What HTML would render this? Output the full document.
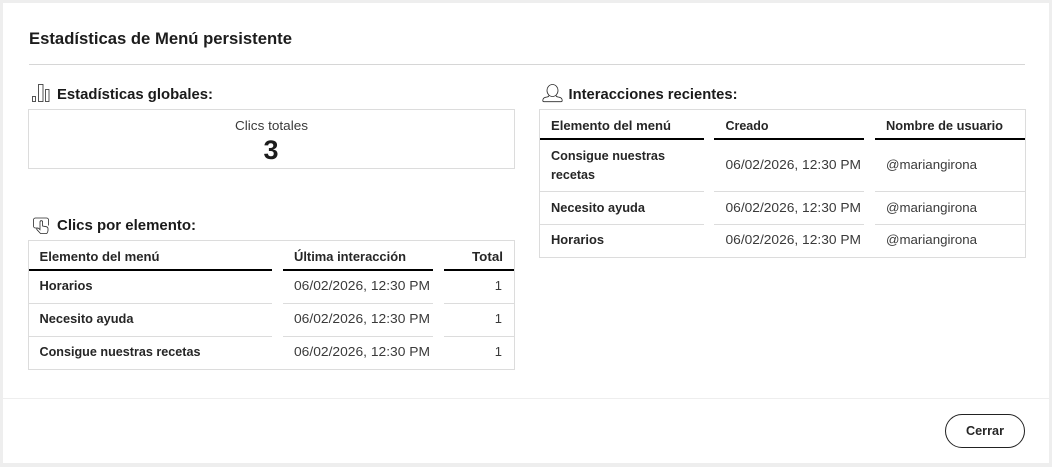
<!DOCTYPE html>
<html lang="es"><head><meta charset="utf-8"><title>Estadísticas</title>
<style>
html,body{margin:0;padding:0;background:#fff;width:1052px;height:467px;overflow:hidden}
svg{display:block}
text{font-family:"Liberation Sans",sans-serif}
.b{font-weight:700;fill:#262626;font-size:13px}
.r{fill:#3a3a3a;font-size:13px}
.h{font-weight:700;fill:#1a1a1a;font-size:15px}
.l{stroke:#dcdcdc;stroke-width:1;fill:none}
.k{stroke:#000;stroke-width:2;fill:none}
.i{stroke:#2a2a2a;stroke-width:.8;fill:none}
</style></head><body>
<svg width="1052" height="467" viewBox="0 0 1052 467" xmlns="http://www.w3.org/2000/svg">
<rect x="0" y="0" width="1052" height="467" fill="#eeeeee"/>
<rect x="3" y="3" width="1046" height="460" fill="#ffffff"/>
<text x="29" y="44" font-size="17" font-weight="700" fill="#1c1c1c" textLength="263" lengthAdjust="spacingAndGlyphs">Estadísticas de Menú persistente</text>
<path d="M29 64.5H1025" stroke="#d6d6d6"/>

<!-- global stats -->
<g class="i"><rect x="32.500" y="96.500" width="3" height="5"/><rect x="38.500" y="84.500" width="4.500" height="17"/><rect x="45.500" y="89.500" width="3.500" height="12"/></g>
<text class="h" x="57" y="99" textLength="156" lengthAdjust="spacingAndGlyphs">Estadísticas globales:</text>
<rect class="l" x="28.5" y="109.5" width="486" height="59"/>
<text class="r" x="235" y="130" textLength="73" lengthAdjust="spacingAndGlyphs">Clics totales</text>
<text x="271" y="159" font-size="27" font-weight="700" fill="#1c1c1c" text-anchor="middle">3</text>

<!-- clicks by element -->
<g class="i"><path d="M37.500 228H35.500a2 2 0 0 1-2-2v-6a2 2 0 0 1 2-2h11a2 2 0 0 1 2 2v5.500"/><path d="M40.500 233.500l-3.500-3.800c-.9-1.100.6-2.300 1.700-1.300l1.300 1.300V222a1.300 1.300 0 0 1 2.600 0v4l3.600.7c1.100.2 1.800 1 1.800 2.100v1.700c0 1.200-.5 2.100-1.200 3z"/></g>
<text class="h" x="57" y="230" textLength="139" lengthAdjust="spacingAndGlyphs">Clics por elemento:</text>
<rect class="l" x="28.5" y="240.500" width="486" height="129"/>
<text class="b" x="39.500" y="261" textLength="120" lengthAdjust="spacingAndGlyphs">Elemento del menú</text>
<text class="b" x="294" y="261" textLength="112" lengthAdjust="spacingAndGlyphs">Última interacción</text>
<text class="b" x="472" y="261" textLength="31" lengthAdjust="spacingAndGlyphs">Total</text>
<path class="k" d="M29 270H272M283 270H433M444 270H514"/>
<path class="l" d="M29 303.500H272M283 303.500H433M444 303.500H514M29 336.500H272M283 336.500H433M444 336.500H514"/>
<text class="b" x="39.500" y="290" textLength="53" lengthAdjust="spacingAndGlyphs">Horarios</text>
<text class="b" x="39.500" y="323" textLength="94" lengthAdjust="spacingAndGlyphs">Necesito ayuda</text>
<text class="b" x="39.500" y="356" textLength="161" lengthAdjust="spacingAndGlyphs">Consigue nuestras recetas</text>
<text class="r" x="294" y="290" textLength="136" lengthAdjust="spacingAndGlyphs">06/02/2026, 12:30 PM</text>
<text class="r" x="294" y="323" textLength="136" lengthAdjust="spacingAndGlyphs">06/02/2026, 12:30 PM</text>
<text class="r" x="294" y="356" textLength="136" lengthAdjust="spacingAndGlyphs">06/02/2026, 12:30 PM</text>
<text class="r" x="502" y="290" text-anchor="end">1</text>
<text class="r" x="502" y="323" text-anchor="end">1</text>
<text class="r" x="502" y="356" text-anchor="end">1</text>

<!-- recent interactions -->
<g class="i"><ellipse cx="552.500" cy="90.500" rx="5.500" ry="6"/><path d="M549 95.500c-.2 1-.8 1.300-2 1.500l-1.500.3c-1.800.4-2.700 1.900-2.700 3.200 0 .8.500 1.200 1.200 1.200h17c.7 0 1.200-.4 1.200-1.200 0-1.300-.9-2.800-2.700-3.200l-1.500-.3c-1.200-.2-1.800-.5-2-1.500"/></g>
<text class="h" x="568.500" y="99" textLength="169" lengthAdjust="spacingAndGlyphs">Interacciones recientes:</text>
<rect class="l" x="539.500" y="109.500" width="486" height="148"/>
<text class="b" x="551" y="130" textLength="120" lengthAdjust="spacingAndGlyphs">Elemento del menú</text>
<text class="b" x="725.500" y="130" textLength="43" lengthAdjust="spacingAndGlyphs">Creado</text>
<text class="b" x="886" y="130" textLength="117" lengthAdjust="spacingAndGlyphs">Nombre de usuario</text>
<path class="k" d="M540 139H704M714 139H864M875 139H1025"/>
<path class="l" d="M540 191.500H704M714 191.500H864M875 191.500H1025M540 224.500H704M714 224.500H864M875 224.500H1025"/>
<text class="b" x="551" y="160" textLength="114" lengthAdjust="spacingAndGlyphs">Consigue nuestras</text>
<text class="b" x="551" y="179" textLength="44" lengthAdjust="spacingAndGlyphs">recetas</text>
<text class="b" x="551" y="212" textLength="94" lengthAdjust="spacingAndGlyphs">Necesito ayuda</text>
<text class="b" x="551" y="244" textLength="53" lengthAdjust="spacingAndGlyphs">Horarios</text>
<text class="r" x="725.500" y="169" textLength="135.500" lengthAdjust="spacingAndGlyphs">06/02/2026, 12:30 PM</text>
<text class="r" x="725.500" y="212" textLength="135.500" lengthAdjust="spacingAndGlyphs">06/02/2026, 12:30 PM</text>
<text class="r" x="725.500" y="244" textLength="135.500" lengthAdjust="spacingAndGlyphs">06/02/2026, 12:30 PM</text>
<text class="r" x="886" y="169" textLength="91" lengthAdjust="spacingAndGlyphs">@mariangirona</text>
<text class="r" x="886" y="212" textLength="91" lengthAdjust="spacingAndGlyphs">@mariangirona</text>
<text class="r" x="886" y="244" textLength="91" lengthAdjust="spacingAndGlyphs">@mariangirona</text>

<!-- footer -->
<path d="M3 398.500H1049" stroke="#eeeeee"/>
<rect x="945.500" y="414.500" width="79" height="33" rx="16.500" fill="#fff" stroke="#222"/>
<text class="b" x="966" y="435" textLength="38" lengthAdjust="spacingAndGlyphs">Cerrar</text>
</svg>
</body></html>
